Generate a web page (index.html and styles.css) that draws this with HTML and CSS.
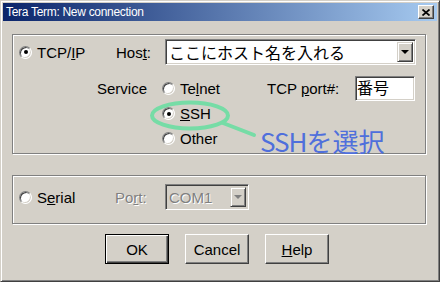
FILE: index.html
```html
<!DOCTYPE html>
<html>
<head>
<meta charset="utf-8">
<link rel="stylesheet" href="styles.css">
</head>
<body>
<div class="window">
	<div class="titlebar">
		<span class="title">Tera Term: New connection</span>
		<span class="closebtn"><svg width="8" height="7" viewBox="0 0 8 7"><path d="M0.5 0.5L7.5 6.5M7.5 0.5L0.5 6.5" stroke="#000" stroke-width="1.7"/></svg></span>
	</div>
	<div class="client">
		<div class="group tcp">
			<div class="row">
				<span class="opt first"><span class="radio on"></span><span>TCP/<u>I</u>P</span></span>
				<span class="lbl hostlbl">Hos<u>t</u>:</span>
				<div class="combo hostbox"><span class="val">ここにホスト名を入れる</span><span class="drop"><i class="arrow"></i></span></div>
			</div>
			<div class="services">
				<span class="lbl">Service</span>
				<span class="opt"><span class="radio"></span><span>Te<u>l</u>net</span></span>
				<span class="lbl">TCP <u>p</u>ort#:</span>
				<div class="edit">番号</div>
				<span class="opt second"><span class="radio on"></span><span><u>S</u>SH</span></span>
				<span class="opt second"><span class="radio"></span><span>Other</span></span>
			</div>
		</div>
		<div class="group serial">
			<div class="row">
				<span class="opt first"><span class="radio"></span><span>S<u>e</u>rial</span></span>
				<span class="lbl portlbl disabled">Po<u>r</u>t:</span>
				<div class="combo combox off"><span class="val">COM1</span><span class="drop"><i class="arrow"></i></span></div>
			</div>
		</div>
		<div class="buttons">
			<span class="btn default">OK</span>
			<span class="btn">Cancel</span>
			<span class="btn"><span><u>H</u>elp</span></span>
		</div>
	</div>
</div>

<!-- annotation drawn over the dialog -->
<svg class="mark" width="440" height="282" viewBox="0 0 440 282">
	<ellipse cx="190" cy="115.5" rx="38" ry="13" fill="none" stroke="#76dca6" stroke-width="4"/>
	<path d="M223 123L254 135" stroke="#76dca6" stroke-width="4" stroke-linecap="round"/>
</svg>
<div class="note"><span class="latin">SSH</span>を選択</div>
</body>
</html>
```

FILE: styles.css
```css
body {
  margin: 0;
  position: relative;
  font-family: "Liberation Sans", Arial, sans-serif;
  font-size: 15px;
  color: #000;
}

/* dialog frame */
.window {
  width: 440px;
  height: 282px;
  box-sizing: border-box;
  background: #d4d0c8;
  border: 1px solid;
  border-color: #d4d0c8 #404040 #404040 #d4d0c8;
  box-shadow: inset 1px 1px #fff, inset -1px -1px #808080;
  padding: 2px;
}

.titlebar {
  height: 18px;
  display: flex;
  align-items: center;
  justify-content: space-between;
  padding: 0 3px 0 3px;
  background: linear-gradient(to right, #0a246a, #a6caf0);
  color: #fff;
}

.title {
  font-size: 12px;
  letter-spacing: -0.3px;
}

.closebtn {
  width: 16px;
  height: 14px;
  box-sizing: border-box;
  display: flex;
  align-items: center;
  justify-content: center;
  background: #d4d0c8;
  border: 1px solid;
  border-color: #fff #404040 #404040 #fff;
  box-shadow: inset -1px -1px #808080;
}

.client {
  padding: 13px 0 0 9px;
}

/* etched group boxes */
.group {
  width: 414px;
  box-sizing: border-box;
  border: 1px solid #808080;
  box-shadow: inset 1px 1px #fff, 1px 1px #fff;
  padding-left: 6px;
}

.tcp {
  height: 120px;
  padding-top: 4px;
}

.serial {
  height: 49px;
  margin-top: 21px;
  padding-top: 8px;
}

.row {
  display: flex;
  align-items: center;
  height: 26px;
}

.opt {
  display: flex;
  align-items: center;
  gap: 5px;
}

.tcp .first { width: 97px; }
.hostlbl { width: 49px; }
.serial .first { width: 96px; }
.portlbl { width: 50px; }

.disabled {
  color: #808080;
  text-shadow: 1px 1px #fff;
}

.radio {
  position: relative;
  width: 13px;
  height: 13px;
  box-sizing: border-box;
  border-radius: 50%;
  background: #fff;
  border: 1px solid;
  border-color: #808080 #fff #fff #808080;
  box-shadow: inset 1px 1px #404040, inset -1px -1px #d4d0c8;
}

.radio.on::after {
  content: "";
  position: absolute;
  left: 3.5px;
  top: 3.5px;
  width: 4px;
  height: 4px;
  border-radius: 50%;
  background: #000;
}

/* combo boxes and edit fields */
.combo, .edit {
  height: 26px;
  box-sizing: border-box;
  background: #fff;
  border: 1px solid;
  border-color: #808080 #fff #fff #808080;
  box-shadow: inset 1px 1px #404040, inset -1px -1px #d4d0c8;
}

.combo {
  display: flex;
  align-items: center;
  justify-content: space-between;
  padding: 2px;
}

.combo .val {
  padding-left: 1px;
}

.hostbox {
  width: 251px;
}

.hostbox .val, .edit {
  font-family: "Noto Sans CJK JP", sans-serif;
  font-size: 16px;
}

.combox {
  width: 84px;
}

.combo.off {
  background: #d4d0c8;
}

.combo.off .val {
  color: #808080;
  text-shadow: 1px 1px #fff;
}

.drop {
  width: 16px;
  height: 100%;
  box-sizing: border-box;
  display: flex;
  align-items: center;
  justify-content: center;
  background: #d4d0c8;
  border: 1px solid;
  border-color: #d4d0c8 #404040 #404040 #d4d0c8;
  box-shadow: inset 1px 1px #fff, inset -1px -1px #808080;
}

.arrow {
  width: 0;
  height: 0;
  border-left: 4px solid transparent;
  border-right: 4px solid transparent;
  border-top: 4px solid #000;
}

.off .arrow {
  border-top-color: #808080;
}

.services {
  display: grid;
  grid-template-columns: 65px 105px 88px 60px;
  grid-template-rows: 25px 25px 25px;
  align-items: center;
  margin: 11px 0 0 78px;
}

.services .second {
  grid-column: 2;
}

.edit {
  height: 25px;
  line-height: 21px;
  padding-left: 1px;
}

/* push buttons */
.buttons {
  display: flex;
  gap: 16px;
  margin-top: 10px;
  padding-left: 93px;
}

.btn {
  width: 64px;
  height: 30px;
  box-sizing: border-box;
  display: flex;
  align-items: center;
  justify-content: center;
  border: 1px solid;
  border-color: #fff #404040 #404040 #fff;
  box-shadow: inset -1px -1px #808080;
}

.btn.default {
  border: 1px solid #000;
  box-shadow: inset 1px 1px #fff, inset -1px -1px #404040, inset -2px -2px #808080;
}

/* annotation overlay */
.mark {
  position: absolute;
  left: 0;
  top: 0;
  pointer-events: none;
}

.note {
  position: absolute;
  left: 260px;
  top: 126px;
  font-family: "Noto Sans CJK JP", sans-serif;
  font-size: 26px;
  line-height: 30px;
  color: #4f6fdc;
}

.note .latin {
  letter-spacing: -1px;
}
```
